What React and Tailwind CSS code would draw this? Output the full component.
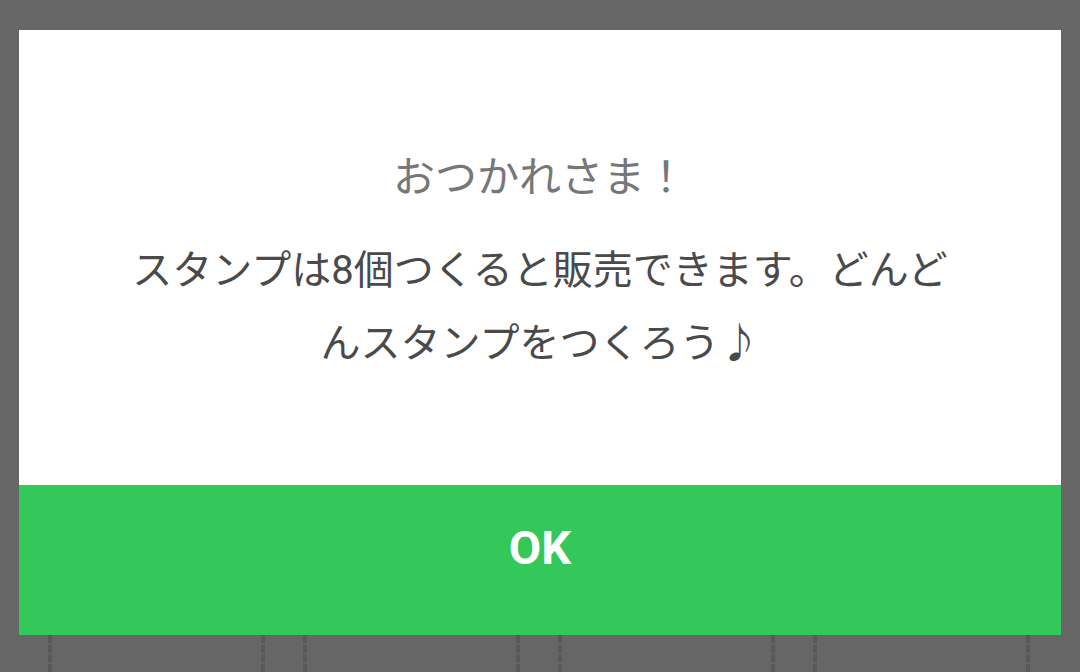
export default function App() {
  return (
    <div className="w-[1080px] h-[672px] overflow-hidden bg-[#666666] flex flex-col pt-[30px] font-['Roboto','Noto_Sans_CJK_JP',sans-serif]">
      {/* dialog */}
      <div className="mx-[19px] flex flex-col">
        <div className="h-[455px] bg-white flex flex-col items-center pt-[120px]">
          <p className="text-[42px] leading-[56px] text-[#777777]">おつかれさま！</p>
          <p className="mt-[28px] w-[830px] text-center text-[40px] leading-[73px] text-[#4a4a4a]">
            スタンプは8個つくると販売できます。どんどんスタンプをつくろう♪
          </p>
        </div>
        <button className="h-[150px] pb-[24px] bg-[#34c759] text-white text-[47px] font-bold flex items-center justify-center">
          OK
        </button>
      </div>

      {/* stamp slots peeking below the dialog */}
      <div className="flex-1 flex gap-[38px] pl-[48px] pr-[50px]">
        {[0, 1, 2, 3].map(i => (
          <div key={i} className="w-[217px] border-x-4 border-dashed border-[#595959]" />
        ))}
      </div>
    </div>
  );
}
